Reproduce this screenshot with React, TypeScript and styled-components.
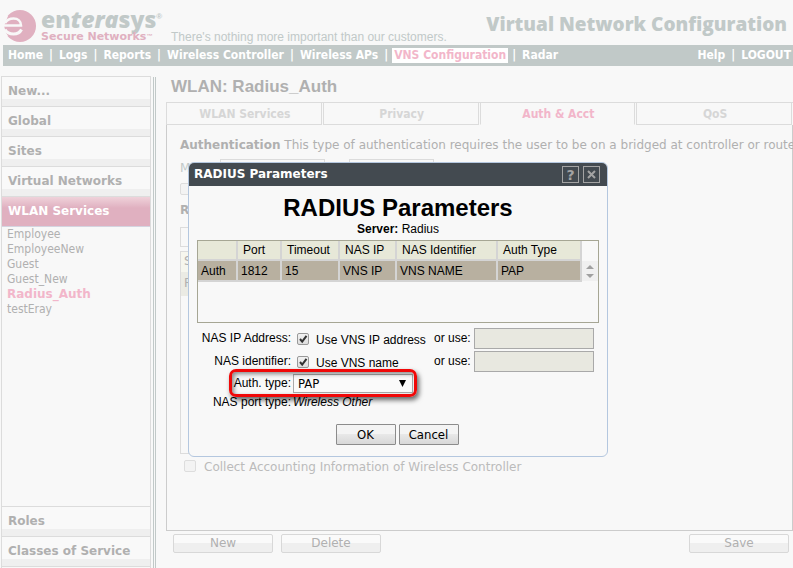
import React from "react";
import styled, { createGlobalStyle } from "styled-components";

const ui = `"DejaVu Sans Condensed", "Noto Sans", sans-serif`;
const wide = `"DejaVu Sans", sans-serif`;
const arial = `"Liberation Sans", Arial, sans-serif`;
const slate = "#c1c9c8";
const rose = "#e0b0c0";
const pink = "#f2b6ca";
const line = "#dcdcdc";
const muted = "#b0b0b0";

const GlobalStyle = createGlobalStyle`
  *, *::before, *::after { box-sizing: border-box; }
  body { margin: 0; background: #f8f8f8; color: ${muted}; font: 12px/15px ${ui}; }
  button, input, select { font: inherit; color: inherit; margin: 0; }
  a { color: inherit; text-decoration: none; }
  h1, h2, p { margin: 0; }
`;

const Page = styled.div`
  position: relative;
  display: flex;
  flex-direction: column;
  min-height: 100vh;
  overflow: hidden;
`;

const Header = styled.header`
  display: flex;
  height: 45px;
  padding: 0 6px 0 3px;
  color: ${slate};
`;
const LogoMark = styled.svg`
  flex: none;
  width: 34px;
  height: 34px;
  margin-top: 9px;
`;
const Brand = styled.div`
  flex: none;
  width: 134px;
  padding: 9px 0 0 4px;
`;
const BrandName = styled.div`
  display: flex;
  align-items: flex-start;
  font: 800 23px/21px "Open Sans", sans-serif;
  sup { font: 700 8px/10px ${arial}; margin-top: 3px; }
`;
const BrandSub = styled.div`
  display: flex;
  color: ${rose};
  font: 700 11px/14px ${wide};
  white-space: nowrap;
  sup { font: 700 6px/8px ${arial}; margin-top: 2px; }
`;
const Tagline = styled.p`
  margin-top: 29px;
  white-space: nowrap;
  font: 12px/16px ${arial};
`;
const ProductTitle = styled.h1`
  margin: 12px 0 0 auto;
  white-space: nowrap;
  font: 800 19px/25px "Open Sans", sans-serif;
`;

const Nav = styled.nav`
  display: flex;
  align-items: center;
  justify-content: space-between;
  height: 21px;
  margin-left: 3px;
  padding: 0 2px 0 5px;
  background: ${slate};
  color: #fff;
  font-weight: 700;
  white-space: nowrap;
`;
const NavGroup = styled.div`
  display: flex;
  gap: 6px;
`;
const NavLink = styled.a<{ $active?: boolean }>`
  ${(p) => p.$active && `background:#fff; color:${pink}; padding:0 2px; margin:0 -2px; line-height:14px;`}
`;

const Body = styled.div`
  display: flex;
  flex: 1;
  padding-top: 10px;
`;
const Sidebar = styled.aside`
  display: flex;
  flex: none;
  flex-direction: column;
  width: 150px;
  margin-left: 1px;
  border: solid ${line};
  border-width: 0 1px;
`;
const SideItem = styled.a<{ $active?: boolean }>`
  display: block;
  height: 30px;
  padding: 5px 6px 0;
  border-top: 1px solid ${line};
  background: ${(p) =>
    p.$active
      ? `linear-gradient(#efd2da, ${rose} 11px)`
      : "linear-gradient(#f9f9f9 22px, #efefef 22px)"};
  color: ${(p) => (p.$active ? "#fff" : muted)};
  font: 700 12px/18px ${wide};
`;
const WlanList = styled.ul`
  flex: 1;
  margin: 0;
  padding: 0 5px;
  border-top: 1px solid #d4d4e0;
  list-style: none;
`;
const WlanLink = styled.a<{ $active?: boolean }>`
  ${(p) => p.$active && `font-weight:700; font-family:${wide}; color:${pink};`}
`;
const SideEnd = styled.div`
  height: 2px;
  border-top: 1px solid ${line};
`;
const Divider = styled.div`
  flex: none;
  width: 3px;
  margin: 1px 10px 0 2px;
  border: solid ${slate};
  border-width: 0 1px;
`;

const Main = styled.main`
  display: flex;
  flex: 1;
  flex-direction: column;
  min-width: 0;
`;
const Title = styled.h2`
  height: 26px;
  padding: 1px 0 0 5px;
  font: 700 17px/20px ${arial};
`;
const Tabs = styled.div`
  display: grid;
  grid-template-columns: repeat(4, 1fr);
  height: 23px;
  border-top: 1px solid ${line};
`;
const Tab = styled.button<{ $active?: boolean }>`
  padding: 1px 0 0 2px;
  border: solid ${line};
  border-width: 0 1px 1px;
  margin-right: 1px;
  background: none;
  color: ${(p) => (p.$active ? pink : "#d6d6d6")};
  ${(p) => p.$active && "border-bottom-color:transparent;"}
  font-weight: 700;
`;
const Panel = styled.section`
  display: flex;
  flex: 1;
  flex-direction: column;
  padding: 13px 0 0 13px;
  border: 1px solid #ccc;
  border-top: 0;
  font-family: ${wide};
`;
const Intro = styled.p`
  white-space: nowrap;
`;
const ModeRow = styled.div`
  display: flex;
  align-items: center;
  gap: 24px;
  height: 29px;
  margin-top: 1px;
`;
const ModeLabel = styled.label`
  width: 16px;
  color: ${slate};
`;
const FaintInput = styled.input<{ $w: number }>`
  width: ${(p) => p.$w}px;
  height: 20px;
  border: 1px solid ${line};
  background: none;
`;
const Tick = styled.input`
  flex: none;
  appearance: none;
  width: 12px;
  height: 12px;
  border: 1px solid #ddd;
  border-radius: 2px;
  background: #f3f3f3;
`;
const Subhead = styled.div`
  margin: 8px 0 9px;
  font-weight: 700;
`;
const ServerBox = styled.div`
  flex: 1;
  width: 400px;
  margin: 4px 0 6px;
  border: 1px solid ${line};
`;
const ServerRow = styled.div<{ $on?: boolean }>`
  height: ${(p) => (p.$on ? 24 : 20)}px;
  padding: ${(p) => (p.$on ? 4 : 2)}px 3px;
  background: ${(p) => (p.$on ? "#ebebe4" : "#f6f6ee")};
`;
const Collect = styled.label`
  display: flex;
  gap: 8px;
  height: 70px;
  padding-left: 4px;
  color: #bbb;
`;
const Actions = styled.div`
  display: flex;
  gap: 8px;
  padding: 3px 4px 15px 7px;
`;
const FaintButton = styled.button<{ $end?: boolean }>`
  width: 100px;
  height: 19px;
  padding: 0;
  border: 1px solid #d8d8d8;
  border-radius: 2px;
  background: linear-gradient(#fafafa 50%, #efefef 50%);
  font-family: ${wide};
  line-height: 15px;
  ${(p) => p.$end && "margin-left:auto;"}
`;

const Overlay = styled.div`
  position: absolute;
  inset: 0;
  padding: 162px 0 0 188px;
`;
const Dialog = styled.div`
  width: 420px;
  border: 1px solid #b4c7df;
  border-radius: 6px;
  background: #f8f8f8;
  color: #000;
  overflow: hidden;
  font-family: ${arial};
`;
const DialogBar = styled.div`
  display: flex;
  align-items: center;
  gap: 4px;
  height: 23px;
  padding: 0 7px 0 5px;
  background: #434a50;
  color: #fff;
  font: 700 12px/15px ${wide};
`;
const BarTitle = styled.span`
  flex: 1;
`;
const BarButton = styled.button`
  display: grid;
  place-items: center;
  width: 17px;
  height: 17px;
  padding: 0;
  border: 1px solid #a3a3a3;
  background: none;
  color: #a3a3a3;
  font: 700 14px/14px ${wide};
`;
const DialogBody = styled.div`
  padding: 7px 8px 11px;
`;
const DialogTitle = styled.h2`
  text-align: center;
  font: 700 24px/29px ${arial};
`;
const ServerLine = styled.p`
  text-align: center;
  line-height: 14px;
`;
const TableBox = styled.div`
  display: flex;
  align-items: flex-start;
  height: 83px;
  margin-top: 4px;
  border: 1px solid #a6a694;
`;
const ParamTable = styled.table`
  flex: 1;
  border-collapse: separate;
  border-spacing: 0;
  table-layout: fixed;
  th, td {
    height: 20px;
    border: solid #d4d4d4;
    border-width: 0 2px 2px 0;
    text-align: left;
    font-weight: 400;
    line-height: 15px;
    white-space: nowrap;
  }
  th { padding: 1px 0 0 5px; background: #e7e8d8; }
  td { height: 21px; padding: 2px 0 0 3px; background: #b8b0a0; }
`;
const Scroller = styled.svg`
  width: 16px;
  height: 20px;
  margin-top: 20px;
  background: #f0f0f0;
`;

const Form = styled.form`
  display: grid;
  grid-template-columns: 94px 143px 40px 120px;
  grid-template-rows: 23px 23px 20px 18px;
  align-items: center;
  margin-top: 4px;
  white-space: nowrap;
`;
const FieldLabel = styled.label`
  text-align: right;
`;
const Check = styled.div`
  display: flex;
  align-items: center;
  gap: 7px;
  padding-left: 6px;
  label { padding-top: 4px; }
`;
const DarkTick = styled.input`
  appearance: none;
  width: 12px;
  height: 12px;
  border: 1px solid #999;
  border-radius: 2px;
  background: linear-gradient(#f2f2f2, #dedede);
`;
const TickWrap = styled.span`
  display: grid;
  > * { grid-area: 1 / 1; }
`;
const TickGlyph = styled.svg`
  z-index: 1;
  width: 12px;
  height: 12px;
  pointer-events: none;
`;
const GreyInput = styled.input`
  width: 120px;
  height: 21px;
  border: 1px solid #a9a9a9;
  background: #e8e8e0;
`;
const TypeCell = styled.div`
  position: relative;
  grid-column: 2 / 5;
  padding-left: 2px;
`;
const TypeSelect = styled.select`
  display: block;
  appearance: none;
  width: 120px;
  height: 19px;
  padding: 0 4px;
  border: 1px solid #aaa;
  background: #fafafa;
  font: 13px/17px ${ui};
`;
const Arrow = styled.svg`
  position: absolute;
  left: 108px;
  top: 6px;
  width: 7px;
  height: 7px;
  pointer-events: none;
`;
const Highlight = styled.div`
  position: absolute;
  left: -62px;
  top: -5px;
  width: 188px;
  height: 28px;
  border: 3px solid #f00808;
  border-radius: 7px;
  box-shadow: 2px 3px 5px rgba(0, 0, 0, 0.6), inset 2px 2px 4px rgba(0, 0, 0, 0.45);
  pointer-events: none;
`;
const PortType = styled.em`
  padding-left: 2px;
`;
const Buttons = styled.div`
  display: flex;
  justify-content: center;
  gap: 3px;
  margin-top: 13px;
  padding-right: 2px;
`;
const DialogButton = styled.button`
  width: 60px;
  height: 21px;
  padding: 0;
  border: 1px solid #8c8c8c;
  border-radius: 1px;
  background: linear-gradient(#f4f4f4 50%, #e8e8e8 50%, #d8d8d8);
  font: 13px/17px ${ui};
`;

const navItems = ["Home", "Logs", "Reports", "Wireless Controller", "Wireless APs", "VNS Configuration", "Radar"];
const wlans = ["Employee", "EmployeeNew", "Guest", "Guest_New", "Radius_Auth", "testEray"];
const columns: [string, string, number][] = [
  ["", "Auth", 40],
  ["Port", "1812", 44],
  ["Timeout", "15", 58],
  ["NAS IP", "VNS IP", 57],
  ["NAS Identifier", "VNS NAME", 101],
  ["Auth Type", "PAP", 84],
];

const NavItems = ({ items }: { items: string[] }) => (
  <NavGroup>
    {items.map((t, i) => (
      <React.Fragment key={t}>
        {i > 0 && <span>|</span>}
        <NavLink href="#" $active={t === "VNS Configuration"}>{t}</NavLink>
      </React.Fragment>
    ))}
  </NavGroup>
);

const CheckField = ({ id, text }: { id: string; text: string }) => (
  <Check>
    <TickWrap>
      <DarkTick id={id} type="checkbox" defaultChecked />
      <TickGlyph viewBox="0 0 12 12">
        <path d="M3 6l2.2 2.6L9.5 2.8" fill="none" stroke="#333" strokeWidth="2" />
      </TickGlyph>
    </TickWrap>
    <label htmlFor={id}>{text}</label>
  </Check>
);

export default function App() {
  return (
    <Page>
      <GlobalStyle />
      <Header>
        <LogoMark viewBox="0 0 34 34">
          <circle cx="17" cy="17" r="16" fill={rose} />
          <path d="M0 7H5L3 12L1 17L3 24L5 27H0Z" fill="#f8f8f8" />
          <path d="M1 16.5H18C18 12 15 9.5 10.5 9.5C6 9.5 3.5 11.5 2 14" fill="none" stroke="#f8f8f8" strokeWidth="2.5" />
          <path d="M2 20.5C4 24 7 25 10.5 25C14 25 17 23.5 18.5 20.5" fill="none" stroke="#f8f8f8" strokeWidth="3" />
        </LogoMark>
        <Brand>
          <BrandName>en<i>tera</i>sys<sup>®</sup></BrandName>
          <BrandSub>Secure Networks<sup>™</sup></BrandSub>
        </Brand>
        <Tagline>There's nothing more important than our customers.</Tagline>
        <ProductTitle>Virtual Network Configuration</ProductTitle>
      </Header>
      <Nav>
        <NavItems items={navItems} />
        <NavItems items={["Help", "LOGOUT"]} />
      </Nav>
      <Body>
        <Sidebar>
          {["New...", "Global", "Sites", "Virtual Networks"].map((t) => (
            <SideItem key={t} href="#">{t}</SideItem>
          ))}
          <SideItem href="#" $active>WLAN Services</SideItem>
          <WlanList>
            {wlans.map((t) => (
              <li key={t}><WlanLink href="#" $active={t === "Radius_Auth"}>{t}</WlanLink></li>
            ))}
          </WlanList>
          <SideItem href="#">Roles</SideItem>
          <SideItem href="#">Classes of Service</SideItem>
          <SideEnd />
        </Sidebar>
        <Divider />
        <Main>
          <Title>WLAN: Radius_Auth</Title>
          <Tabs>
            {["WLAN Services", "Privacy", "Auth & Acct", "QoS"].map((t) => (
              <Tab key={t} $active={t === "Auth & Acct"}>{t}</Tab>
            ))}
          </Tabs>
          <Panel>
            <Intro>
              <b>Authentication</b> This type of authentication requires the user to be on a bridged at controller or routed
            </Intro>
            <ModeRow>
              <ModeLabel htmlFor="mode">M</ModeLabel>
              <FaintInput id="mode" $w={105} />
              <FaintInput aria-label="Mode options" $w={85} />
            </ModeRow>
            <Tick type="checkbox" aria-label="Enable" />
            <Subhead>R</Subhead>
            <FaintInput aria-label="Server" $w={105} />
            <ServerBox>
              <ServerRow>S</ServerRow>
              <ServerRow $on>R</ServerRow>
            </ServerBox>
            <Collect>
              <Tick type="checkbox" disabled />
              Collect Accounting Information of Wireless Controller
            </Collect>
          </Panel>
          <Actions>
            <FaintButton>New</FaintButton>
            <FaintButton>Delete</FaintButton>
            <FaintButton $end>Save</FaintButton>
          </Actions>
        </Main>
      </Body>
      <Overlay>
        <Dialog role="dialog" aria-labelledby="dialog-title">
          <DialogBar>
            <BarTitle>RADIUS Parameters</BarTitle>
            <BarButton aria-label="Help">?</BarButton>
            <BarButton aria-label="Close">
              <svg width="9" height="9" viewBox="0 0 9 9">
                <path d="M1 1l7 7M8 1L1 8" stroke="#a3a3a3" strokeWidth="2" />
              </svg>
            </BarButton>
          </DialogBar>
          <DialogBody>
            <DialogTitle id="dialog-title">RADIUS Parameters</DialogTitle>
            <ServerLine><b>Server:</b> Radius</ServerLine>
            <TableBox>
              <ParamTable>
                <colgroup>
                  {columns.map(([h, , w]) => <col key={h} width={w} />)}
                </colgroup>
                <thead>
                  <tr>{columns.map(([h]) => <th key={h}>{h}</th>)}</tr>
                </thead>
                <tbody>
                  <tr>{columns.map(([h, v]) => <td key={h}>{v}</td>)}</tr>
                </tbody>
              </ParamTable>
              <Scroller viewBox="0 0 16 20">
                <path d="M4 8L8 4L12 8ZM4 13L8 17L12 13Z" fill="#a0a0a0" />
              </Scroller>
            </TableBox>
            <Form>
              <FieldLabel htmlFor="use-ip">NAS IP Address:</FieldLabel>
              <CheckField id="use-ip" text="Use VNS IP address" />
              <label htmlFor="ip">or use:</label>
              <GreyInput id="ip" />
              <FieldLabel htmlFor="use-name">NAS identifier:</FieldLabel>
              <CheckField id="use-name" text="Use VNS name" />
              <label htmlFor="name">or use:</label>
              <GreyInput id="name" />
              <FieldLabel htmlFor="auth-type">Auth. type:</FieldLabel>
              <TypeCell>
                <TypeSelect id="auth-type" defaultValue="PAP"><option>PAP</option></TypeSelect>
                <Arrow viewBox="0 0 7 7"><path d="M0 0H7L3.5 7Z" /></Arrow>
                <Highlight />
              </TypeCell>
              <FieldLabel as="span">NAS port type:</FieldLabel>
              <PortType>Wireless Other</PortType>
            </Form>
            <Buttons>
              <DialogButton>OK</DialogButton>
              <DialogButton>Cancel</DialogButton>
            </Buttons>
          </DialogBody>
        </Dialog>
      </Overlay>
    </Page>
  );
}
